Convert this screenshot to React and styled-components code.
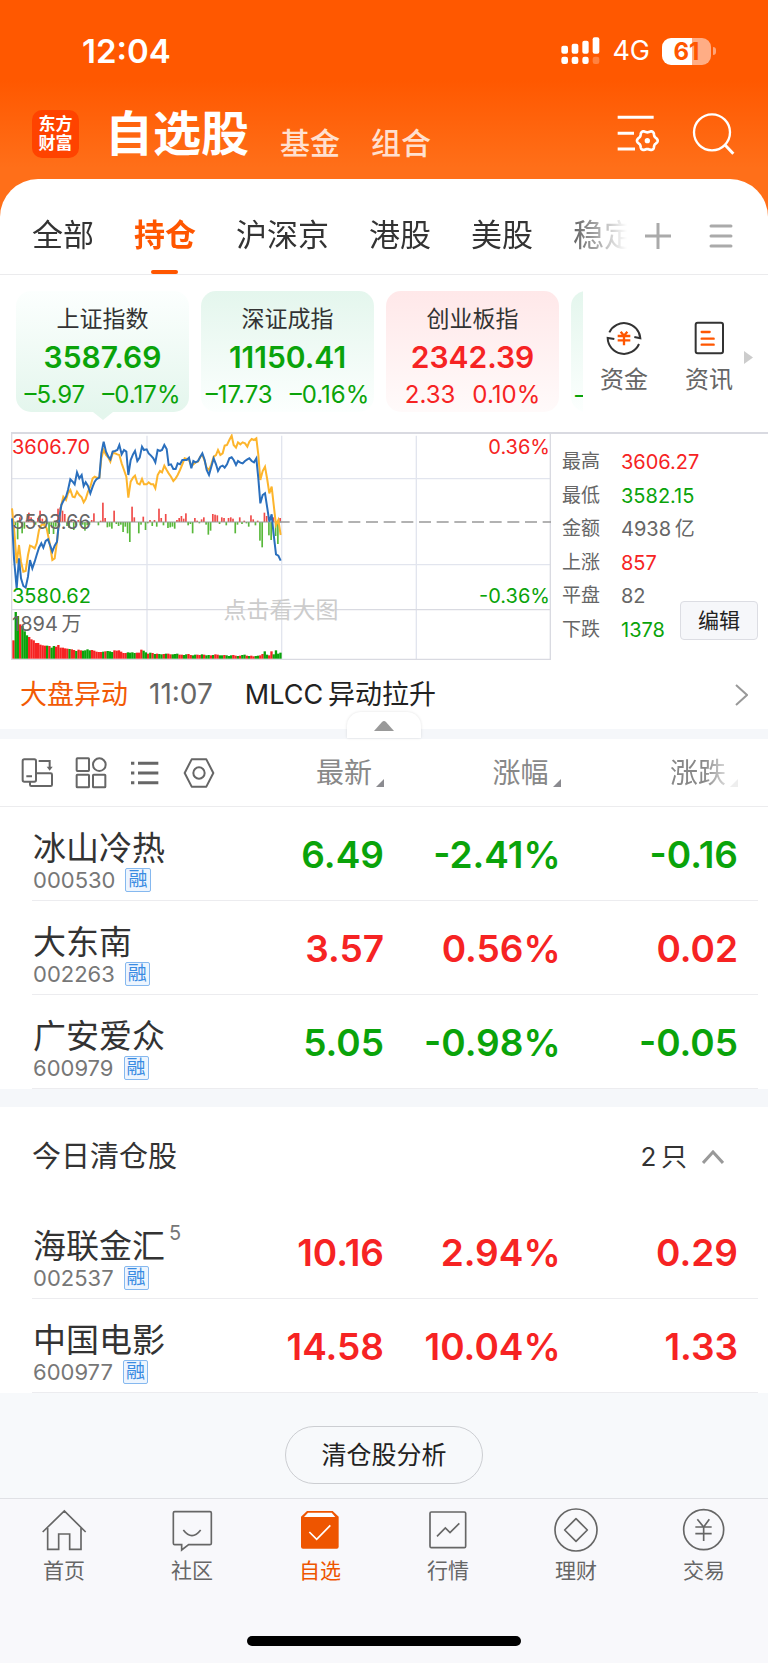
import React from "react";
import styled, { createGlobalStyle } from "styled-components";

const RED = "#f62323";
const GREEN = "#0aa30a";
const ORANGE = "#ff5600";

const GlobalStyle = createGlobalStyle`
  * {
    box-sizing: border-box;
  }
  body {
    margin: 0;
    background: #f8f8fb;
    color: #333;
    font-family: Inter, "Noto Sans CJK SC", sans-serif;
    -webkit-font-smoothing: antialiased;
  }
  button {
    border: 0;
    padding: 0;
    background: none;
    color: inherit;
    font: inherit;
    cursor: pointer;
  }
  a {
    color: inherit;
    text-decoration: none;
  }
  svg {
    display: block;
  }
`;

const toneColor = ({ $tone }) =>
  $tone === "up" ? RED : $tone === "down" ? GREEN : "#666";

/* ---------- header ---------- */

const Header = styled.header`
  padding-bottom: 40px;
  color: #fff;
  background: linear-gradient(#ff5800 80px, #ff6f19 168px);
`;
const StatusBar = styled.div`
  display: flex;
  align-items: center;
  padding: 32px 52px 28px 82px;
  line-height: 38px;
`;
const Clock = styled.time`
  flex: 1;
  font-size: 33px;
  font-weight: 600;
`;
const Network = styled.span`
  margin: 0 12px;
  font-size: 27px;
`;
const Battery = styled.div`
  width: 49px;
  border-radius: 9px;
  background: linear-gradient(90deg, #fff 62%, #ffad85 62%);
  color: ${ORANGE};
  font-size: 24px;
  font-weight: 700;
  line-height: 27px;
  text-align: center;
`;
const BatteryTip = styled.span`
  width: 3px;
  height: 8px;
  margin-left: 2px;
  border-radius: 0 4px 4px 0;
  background: #ffa477;
`;
const TitleBar = styled.div`
  display: flex;
  align-items: center;
  padding: 8px 34px 17px 32px;
`;
const Logo = styled.div`
  width: 47px;
  padding: 5px 0;
  border-radius: 10px;
  background: #ff4300;
  font-size: 17px;
  font-weight: 700;
  line-height: 19px;
  text-align: center;
`;
const Sections = styled.nav`
  flex: 1;
  display: flex;
  align-items: flex-end;
  gap: 31px;
  margin-left: 26px;
`;
const Title = styled.h1`
  margin: 0;
  font-size: 48px;
  font-weight: 700;
  line-height: 56px;
`;
const SectionLink = styled.a`
  color: #ffe0cf;
  font-size: 30px;
  font-weight: 500;
  line-height: 38px;
`;
const HeaderTools = styled.div`
  display: flex;
  gap: 30px;
`;

/* ---------- sheet with tabs ---------- */

const Sheet = styled.main`
  margin-top: -40px;
  border-radius: 38px 38px 0 0;
  background: #fff;
  overflow: hidden;
`;
const TabBar = styled.div`
  display: flex;
  border-bottom: 1px solid #ebebed;
`;
const Tabs = styled.div`
  flex: 1;
  min-width: 0;
  display: flex;
  gap: 40px;
  padding-left: 32px;
  overflow: hidden;
  mask-image: linear-gradient(90deg, #000 calc(100% - 70px), transparent);
`;
const Tab = styled.button`
  position: relative;
  flex: none;
  padding: 36px 0 19px;
  color: ${(p) => (p.$active ? ORANGE : "#333")};
  font-size: 31px;
  font-weight: ${(p) => (p.$active ? 700 : 400)};
  line-height: 40px;
  &::after {
    content: "";
    position: absolute;
    left: 50%;
    bottom: 0;
    width: 27px;
    height: 4px;
    margin-left: -14px;
    border-radius: 2px;
    background: ${(p) => (p.$active ? ORANGE : "transparent")};
  }
`;
const TabTools = styled.div`
  display: flex;
  align-items: center;
  gap: 38px;
  padding: 18px 35px 0 18px;
`;

/* ---------- index cards ---------- */

const IndexStrip = styled.section`
  display: flex;
`;
const Cards = styled.div`
  flex: 1;
  min-width: 0;
  display: flex;
  gap: 12px;
  padding: 16px 0 20px 16px;
  overflow: hidden;
`;
const cardTint = ({ $tone, $active }) => {
  const tint = $tone === "up" ? "#ffe8e9" : "#e4f6ed";
  const light = $tone === "up" ? "#fffafa" : "#fcfffe";
  return $active ? `${light}, ${tint}` : `${tint}, ${light}`;
};
const Card = styled.button`
  position: relative;
  flex: none;
  width: 173px;
  padding: 13px 0 2px;
  border-radius: 15px;
  background: linear-gradient(${cardTint});
  color: ${toneColor};
  &::after {
    content: "";
    display: ${(p) => (p.$active ? "block" : "none")};
    position: absolute;
    top: 100%;
    left: 50%;
    margin-left: -10px;
    border: 10px solid transparent;
    border-top: 8px solid #e4f6ed;
    border-bottom: 0;
  }
`;
const CardName = styled.div`
  color: #333;
  font-size: 23px;
  line-height: 30px;
`;
const CardPrice = styled.div`
  font-size: 30px;
  font-weight: 600;
  line-height: 46px;
`;
const CardChange = styled.div`
  display: flex;
  justify-content: center;
  gap: 17px;
  font-size: 24px;
  line-height: 30px;
`;
const PeekCard = styled(Card)`
  padding: 89px 4px 2px;
  font-size: 24px;
  line-height: 30px;
  text-align: left;
`;
const Shortcuts = styled.div`
  display: flex;
  align-items: center;
  padding: 8px 15px 0 17px;
`;
const Shortcut = styled.a`
  display: flex;
  flex-direction: column;
  align-items: center;
  gap: 8px;
  margin-right: ${(p) => (p.$last ? 11 : 37)}px;
  color: #666;
  font-size: 24px;
  line-height: 32px;
`;

/* ---------- intraday chart ---------- */

const Intraday = styled.section`
  display: flex;
  margin-left: 11px;
  border-top: 2px solid #d9dae1;
`;
const ChartBox = styled.div`
  position: relative;
  flex: 1;
  min-width: 0;
  height: 226px;
`;
const ChartLabel = styled.span`
  position: absolute;
  top: ${(p) => p.$top}px;
  ${(p) => (p.$right ? "right: 1px;" : "left: 1px;")}
  color: ${toneColor};
  font-size: 20px;
  line-height: 24px;
`;
const ChartHint = styled.span`
  position: absolute;
  top: 161px;
  left: 0;
  right: 0;
  color: #ccc;
  font-size: 23px;
  line-height: 30px;
  text-align: center;
`;
const Stats = styled.div`
  position: relative;
  width: 217px;
`;
const StatList = styled.dl`
  display: grid;
  grid-template-columns: 49px 1fr;
  column-gap: 10px;
  align-content: space-between;
  height: 100%;
  margin: 0;
  padding: 18px 0 20px 11px;
  font-size: 19px;
  line-height: 20px;
  color: #666;
`;
const StatValue = styled.dd`
  margin: 0;
  color: ${toneColor};
  font-size: 20px;
`;
const EditButton = styled.button`
  position: absolute;
  right: 10px;
  bottom: 20px;
  padding: 0 17px;
  border: 1px solid #dcdde3;
  border-radius: 4px;
  background: #f6f7fa;
  color: #222;
  font-size: 21px;
  line-height: 37px;
`;

/* ---------- news ticker ---------- */

const News = styled.a`
  display: flex;
  align-items: center;
  padding: 17px 20px;
  font-size: 27px;
  line-height: 35px;
`;
const NewsTag = styled.span`
  margin-right: 21px;
  color: #f25a05;
`;
const NewsTime = styled.time`
  margin-right: 32px;
  color: #666;
  font-size: 28px;
`;
const NewsTitle = styled.span`
  flex: 1;
  color: #222;
`;
const Divider = styled.div`
  position: relative;
  height: ${(p) => p.$size}px;
  background: #f5f7fa;
`;
const Collapse = styled.button`
  position: absolute;
  left: 50%;
  bottom: 1px;
  width: 74px;
  margin-left: -37px;
  padding: 9px 27px 7px;
  border-radius: 14px 14px 0 0;
  background: #fff;
  box-shadow: 0 0 3px rgba(0, 0, 0, 0.12);
`;

/* ---------- stock table ---------- */

const Table = styled.table`
  width: 100%;
  table-layout: fixed;
  border-collapse: collapse;
`;
const HeadRow = styled.tr`
  border-bottom: 1px solid #ececee;
`;
const HeadCell = styled.th`
  width: ${(p) => p.$width};
  padding: 14px ${(p) => (p.$last ? 30 : 0)}px 13px 0;
  color: #888;
  font-size: 28px;
  font-weight: 400;
  line-height: 40px;
  text-align: right;
`;
const SortButton = styled.button`
  display: inline-flex;
  align-items: flex-end;
  gap: 4px;
  ${(p) =>
    p.$faded &&
    "mask-image: linear-gradient(90deg, #000 50%, rgba(0, 0, 0, 0.15) 90%);"}
  &::after {
    content: "";
    margin-bottom: 6px;
    border: 4px solid transparent;
    border-right-color: #8b8b90;
    border-bottom-color: #8b8b90;
  }
`;
const ViewTools = styled.div`
  display: flex;
  gap: 22px;
  padding-left: 21px;
  color: #666;
`;
const Row = styled.tr`
  background: linear-gradient(#ececef, #ececef) no-repeat 32px 100%;
  background-size: calc(100% - 42px) 1px;
`;
const StockCell = styled.th`
  width: 34%;
  padding: 21px 0 9px 33px;
  font-weight: 400;
  text-align: left;
  white-space: nowrap;
`;
const StockName = styled.div`
  font-size: 33px;
  line-height: 40px;
`;
const Days = styled.sup`
  margin-left: 4px;
  color: #777;
  font-size: 20px;
  line-height: 0;
  vertical-align: 18px;
`;
const StockMeta = styled.div`
  display: flex;
  align-items: center;
  gap: 10px;
  color: #777;
  font-size: 22px;
  line-height: 24px;
`;
const Margin = styled.span`
  padding: 0 2px;
  border: 1px solid #85b8ef;
  border-radius: 2px;
  background: #edf5fe;
  color: #3a8be2;
  font-size: 19px;
  line-height: 22px;
`;
const Figure = styled.td`
  width: ${(p) => p.$width};
  padding: 2px ${(p) => (p.$last ? 30 : 0)}px 0 0;
  color: ${toneColor};
  font-size: 37px;
  font-weight: 600;
  line-height: 44px;
  text-align: right;
  white-space: nowrap;
`;
const GroupBar = styled.button`
  display: flex;
  align-items: center;
  width: 100%;
  padding: 30px 44px 28px 32px;
  font-size: 29px;
  line-height: 40px;
  text-align: left;
`;
const GroupCount = styled.span`
  margin: 0 15px 0 auto;
  font-size: 26px;
`;
const Analysis = styled.div`
  display: flex;
  justify-content: center;
  padding: 33px 0 14px;
  background: #f7f9fb;
`;
const AnalysisButton = styled.button`
  padding: 0 35px;
  border: 1px solid #ccced2;
  border-radius: 29px;
  color: #222;
  font-size: 25px;
  line-height: 56px;
`;

/* ---------- bottom navigation ---------- */

const BottomNav = styled.nav`
  display: grid;
  grid-template-columns: repeat(6, 1fr);
  padding-top: 9px;
  border-top: 1px solid #e0e1e5;
`;
const NavItem = styled.a`
  display: flex;
  flex-direction: column;
  align-items: center;
  gap: 5px;
  color: ${(p) => (p.$active ? "#ee5500" : "#666")};
  font-size: 21px;
  line-height: 28px;
`;
const HomeIndicator = styled.div`
  width: 274px;
  height: 10px;
  margin: 51px auto 17px;
  border-radius: 5px;
  background: #000;
`;

/* ---------- icons ---------- */

function Icon({ size, box, width = 5, children }) {
  return (
    <svg
      width={size}
      height={size}
      viewBox={`0 0 ${box} ${box}`}
      fill="none"
      stroke="currentColor"
      strokeWidth={width}
      overflow="visible"
      aria-hidden="true"
    >
      {children}
    </svg>
  );
}

// six-lobed cog around (94, 86)
const cogPoints = Array.from({ length: 72 }, (_, i) => {
  const a = (i / 72) * Math.PI * 2;
  const r = 28 + 3 * Math.cos(a * 6);
  return `${(94 + r * Math.cos(a)).toFixed(1)},${(86 + r * Math.sin(a)).toFixed(1)}`;
}).join(" ");

const SettingsIcon = () => (
  <Icon size={44} box={132} width={9}>
    <path d="M5 16H113M5 64H54M5 111H57" />
    <polygon points={cogPoints} strokeWidth="8" />
    <circle cx="94" cy="86" r="8" fill="currentColor" stroke="none" />
  </Icon>
);

const SearchIcon = () => (
  <Icon size={44} box={132} width={7}>
    <circle cx="66" cy="61" r="54" />
    <path d="M103 97L130 125" strokeWidth="9" />
  </Icon>
);

const Signal = () => (
  <svg width="39" height="28" viewBox="0 0 117 84" fill="#fff" aria-hidden="true">
    <rect x="1" y="26" width="20" height="24" rx="6" />
    <rect x="32" y="20" width="20" height="30" rx="6" />
    <rect x="64" y="11" width="19" height="39" rx="6" />
    <rect x="95" y="1" width="20" height="49" rx="6" />
    <rect x="1" y="59" width="20" height="22" rx="7" />
    <rect x="32" y="59" width="20" height="22" rx="7" />
    <rect x="64" y="59" width="19" height="22" rx="7" />
    <rect x="95" y="59" width="20" height="22" rx="7" opacity="0.25" />
  </svg>
);

const viewIcons = {
  切换: (
    <>
      <rect x="5" y="7" width="40" height="67" rx="5" />
      <path d="M16 58H33M45 49H89Q93 49 93 53V83Q93 87 89 87H31Q27 87 27 83V75M53 12H86V34" />
      <path d="M77 29H95L86 41Z" fill="currentColor" stroke="none" />
    </>
  ),
  宫格: (
    <>
      <rect x="5" y="4" width="37" height="38" rx="2" />
      <circle cx="73" cy="23" r="19" />
      <rect x="5" y="53" width="37" height="38" rx="2" />
      <rect x="54" y="53" width="37" height="38" rx="2" />
    </>
  ),
  列表: (
    <path d="M6 19H16M27 19H88M6 48H16M27 48H88M6 77H16M27 77H88" strokeWidth="9" />
  ),
  设置: (
    <>
      <path d="M5 48L26 7H70L91 48L70 89H26Z" strokeLinejoin="round" />
      <circle cx="48" cy="48" r="17" />
    </>
  ),
};

const navItems = [
  {
    label: "首页",
    icon: <path d="M2 72L67 9L131 72M17 60V124H50V78H83V124H117V60" />,
  },
  {
    label: "社区",
    icon: (
      <>
        <path d="M14 11H120Q124 11 124 15V106Q124 110 120 110H56L35 126V110H14Q10 110 10 106V15Q10 11 14 11Z" />
        <path d="M40 66Q66 100 92 66" />
      </>
    ),
  },
  {
    label: "自选",
    active: true,
    icon: (
      <>
        <path
          d="M9 26L27 9H104L122 26V116Q122 122 116 122H15Q9 122 9 116Z"
          fill="currentColor"
          stroke="none"
        />
        <path d="M18 27L30 14H101L112 27Z" fill="#fff" stroke="none" />
        <path d="M34 72L56 94L97 52" stroke="#fff" />
      </>
    ),
  },
  {
    label: "行情",
    icon: (
      <>
        <rect x="12" y="12" width="107" height="107" rx="4" />
        <path d="M33 85L58 60L72 74L100 46" />
      </>
    ),
  },
  {
    label: "理财",
    icon: (
      <>
        <circle cx="66" cy="66" r="63" />
        <path d="M66 32L100 66L66 100L32 66Z" strokeLinejoin="round" />
      </>
    ),
  },
  {
    label: "交易",
    icon: (
      <>
        <circle cx="65" cy="65" r="60" />
        <path d="M46 34L65 57L82 34M40 57H89M40 77H89M65 57V99" />
      </>
    ),
  },
];

/* ---------- data ---------- */

const tabs = ["全部", "持仓", "沪深京", "港股", "美股", "稳定"];

const indexes = [
  { name: "上证指数", price: "3587.69", diff: "–5.97", pct: "–0.17%", tone: "down" },
  { name: "深证成指", price: "11150.41", diff: "–17.73", pct: "–0.16%", tone: "down" },
  { name: "创业板指", price: "2342.39", diff: "2.33", pct: "0.10%", tone: "up" },
];

const stats = [
  ["最高", "3606.27", "up"],
  ["最低", "3582.15", "down"],
  ["金额", "4938\u2009亿"],
  ["上涨", "857", "up"],
  ["平盘", "82"],
  ["下跌", "1378", "down"],
];

const holdings = [
  { name: "冰山冷热", code: "000530", last: "6.49", pct: "-2.41%", diff: "-0.16", tone: "down" },
  { name: "大东南", code: "002263", last: "3.57", pct: "0.56%", diff: "0.02", tone: "up" },
  { name: "广安爱众", code: "600979", last: "5.05", pct: "-0.98%", diff: "-0.05", tone: "down" },
];

const cleared = [
  { name: "海联金汇", days: 5, code: "002537", last: "10.16", pct: "2.94%", diff: "0.29", tone: "up" },
  { name: "中国电影", code: "600977", last: "14.58", pct: "10.04%", diff: "1.33", tone: "up" },
];

const priceLine =
  "36,280 42,400 50,490 57,400 63,460 70,483 77,488 84,455 90,405 97,430 104,410 110,390 117,368 124,355 130,368 137,348 144,343 150,360 157,380 164,362 171,350 178,280 184,240 190,228 198,215 204,195 211,163 218,170 224,178 231,142 238,160 245,150 251,183 257,172 264,183 271,205 278,185 284,170 290,162 298,158 304,85 311,50 318,80 325,95 331,103 338,80 345,78 352,75 358,60 365,88 372,75 379,80 385,150 392,105 399,88 405,78 412,108 419,98 426,65 432,75 440,73 446,85 453,92 460,100 466,112 473,75 480,78 486,75 493,60 500,72 506,120 513,118 520,132 527,132 533,115 540,118 547,105 554,105 560,105 567,98 574,130 580,108 587,112 594,108 601,95 607,85 614,105 620,135 627,150 634,125 641,100 648,118 654,138 661,125 668,122 674,128 681,118 688,100 695,97 701,105 708,120 714,108 721,113 728,115 735,108 742,103 748,100 755,108 762,112 769,100 775,160 781,235 788,210 795,205 802,250 808,290 815,268 820,320 828,388 835,392 842,407";

const averageLine =
  "36,250 43,320 50,415 57,360 63,410 70,440 77,438 84,390 90,362 97,365 104,370 110,355 117,315 124,300 132,298 140,310 150,360 157,405 164,400 171,350 178,280 184,240 190,215 198,225 204,205 211,195 218,215 224,217 231,200 238,210 245,217 251,232 257,222 264,200 271,185 278,160 284,155 290,158 298,158 304,100 311,75 318,90 325,98 331,110 338,85 345,85 352,88 358,90 365,115 372,135 379,155 385,218 392,170 399,158 405,152 412,175 419,178 426,162 432,178 440,178 446,172 453,178 460,178 466,190 473,150 480,138 486,142 493,122 500,135 506,145 513,155 520,168 527,160 533,150 540,135 547,118 554,100 560,102 567,105 574,122 580,118 587,112 594,110 601,95 607,90 614,108 620,128 627,135 634,118 641,95 648,90 654,75 661,90 668,85 674,62 681,60 688,45 695,32 701,60 708,68 714,52 721,58 728,52 735,55 742,65 748,50 755,42 762,45 769,40 775,90 781,165 788,138 795,125 802,165 808,205 815,185 820,230 828,300 835,285 842,330";

// one entry per minute slot, positive is drawn above the middle line
const momentum = [
  8, -10, -52, 14, -34, -20, 6, 28, 14, 6, -8, 12, 34, 10, -14, -6, -36, -10, -36, -14,
  40, 44, 34, 24, -12, -18, 8, -24, -10, 6, -10, -8, -26, -10, -8, 6, 26, 0, -10, 4,
  58, 12, -16, -14, -20, 34, -6, -12, -8, -30, -14, -34, -60, 46, 14, 0, -34, -8, 16, -24,
  -4, 6, -12, 6, -14, 40, 12, -10, 24, -18, -16, -14, -20, 6, 12, 18, 10, 26, -10, -6,
  -34, 12, 4, -4, 8, 14, -8, -38, -26, 24, 22, 20, -6, 14, 12, -10, 12, 14, 10, -34,
  -8, 14, -6, 4, -4, -14, 20, 8, -10, 4, -56, -76, 28, 18, -40, -54, 14, -42, -66, 12,
];

const volume = [
  55, 140, 128, 103, 98, 82, 70, 65, 58, 55, 47, 47, 42, 40, 39, 39, 38, 33, 38, 36,
  41, 33, 33, 31, 30, 29, 28, 26, 23, 27, 25, 24, 25, 28, 25, 26, 24, 21, 20, 20,
  21, 22, 23, 22, 20, 25, 24, 25, 21, 17, 17, 19, 18, 19, 17, 18, 18, 27, 24, 19,
  15, 18, 17, 14, 15, 14, 13, 14, 15, 15, 13, 13, 14, 15, 12, 12, 11, 13, 14, 11,
  10, 12, 12, 11, 13, 12, 10, 11, 10, 11, 13, 12, 10, 10, 11, 10, 8, 10, 11, 9,
  8, 9, 11, 12, 9, 8, 9, 7, 8, 9, 10, 14, 22, 12, 10, 22, 13, 25, 15, 18,
];
const volumeTone =
  "rggrgggrrrrrrrrgrggrrrrrrgrrgrrggggrrrrrgrgggrrrrrrggggrrrggrgrgrggrgrrgggrrggrrggrrgrggrgrrggrgggrrgrggrgrrggrrggrrgggg";

/* ---------- components ---------- */

function Chart() {
  return (
    <ChartBox>
      <svg
        width="100%"
        height="100%"
        viewBox="33 27 1620 678"
        preserveAspectRatio="none"
        fill="none"
        role="img"
        aria-label="上证指数分时图"
      >
        <g stroke="#e2e5ee" strokeWidth="4">
          <path d="M33 161H1653M33 419H1653M441 32V702M845 32V702M1249 32V702" />
        </g>
        <path d="M35 27V703H1651V27M33 554H1653" stroke="#d9dae1" strokeWidth="4" />
        {momentum.map((value, i) => (
          <rect
            key={i}
            x={37 + i * 6.73}
            y={value > 0 ? 291 - value : 291}
            width="5"
            height={Math.abs(value)}
            fill={value > 0 ? "#f04a48" : "#58b83a"}
          />
        ))}
        <path d="M36 291H845" stroke="#999" strokeWidth="3" />
        <path d="M833 291H1653" stroke="#999" strokeWidth="5" strokeDasharray="36 17" />
        {volume.map((value, i) => (
          <rect
            key={i}
            x={37 + i * 6.73}
            y={701 - value}
            width="7"
            height={value}
            fill={volumeTone[i] === "r" ? RED : GREEN}
          />
        ))}
        <polyline points={averageLine} stroke="#fdb52c" strokeWidth="6" />
        <polyline points={priceLine} stroke="#2a6fbd" strokeWidth="6" />
      </svg>
      <ChartLabel $top={1} $tone="up">3606.70</ChartLabel>
      <ChartLabel $top={76}>3593.66</ChartLabel>
      <ChartLabel $top={150} $tone="down">3580.62</ChartLabel>
      <ChartLabel $top={178}>{"1894\u2009万"}</ChartLabel>
      <ChartLabel $top={1} $right $tone="up">0.36%</ChartLabel>
      <ChartLabel $top={150} $right $tone="down">-0.36%</ChartLabel>
      <ChartHint>点击看大图</ChartHint>
    </ChartBox>
  );
}

function StockRow({ stock }) {
  return (
    <Row>
      <StockCell scope="row">
        <StockName>
          {stock.name}
          {stock.days && <Days>{stock.days}</Days>}
        </StockName>
        <StockMeta>
          {stock.code}
          <Margin>融</Margin>
        </StockMeta>
      </StockCell>
      <Figure $width="16%" $tone={stock.tone}>{stock.last}</Figure>
      <Figure $width="23%" $tone={stock.tone}>{stock.pct}</Figure>
      <Figure $width="27%" $last $tone={stock.tone}>{stock.diff}</Figure>
    </Row>
  );
}

function App() {
  return (
    <>
      <GlobalStyle />
      <Header>
        <StatusBar>
          <Clock>12:04</Clock>
          <Signal />
          <Network>4G</Network>
          <Battery>61</Battery>
          <BatteryTip />
        </StatusBar>
        <TitleBar>
          <Logo>
            东方
            <br />
            财富
          </Logo>
          <Sections>
            <Title>自选股</Title>
            <SectionLink href="#fund">基金</SectionLink>
            <SectionLink href="#portfolio">组合</SectionLink>
          </Sections>
          <HeaderTools>
            <button aria-label="管理">
              <SettingsIcon />
            </button>
            <button aria-label="搜索">
              <SearchIcon />
            </button>
          </HeaderTools>
        </TitleBar>
      </Header>

      <Sheet>
        <TabBar>
          <Tabs>
            {tabs.map((tab) => (
              <Tab key={tab} $active={tab === "持仓"}>
                {tab}
              </Tab>
            ))}
          </Tabs>
          <TabTools>
            <button aria-label="添加分组">
              <svg width="26" height="26" stroke="#aaa" strokeWidth="3">
                <path d="M0 13H26M13 0V26" />
              </svg>
            </button>
            <button aria-label="全部分组">
              <svg width="24" height="26" stroke="#aaa" strokeWidth="3" strokeLinecap="round">
                <path d="M2 3H22M2 13H22M2 23H22" />
              </svg>
            </button>
          </TabTools>
        </TabBar>

        <IndexStrip>
          <Cards>
            {indexes.map((item, i) => (
              <Card key={item.name} $tone={item.tone} $active={i === 0}>
                <CardName>{item.name}</CardName>
                <CardPrice>{item.price}</CardPrice>
                <CardChange>
                  <span>{item.diff}</span>
                  <span>{item.pct}</span>
                </CardChange>
              </Card>
            ))}
            <PeekCard $tone="down">–</PeekCard>
          </Cards>
          <Shortcuts>
            <Shortcut href="#money">
              <Icon size={36} box={108} width={6}>
                <g stroke="#333">
                  <path d="M10 37A49 49 0 0 1 103 55L85 51M25 57L5 54A49 49 0 0 0 99 72" />
                </g>
                <path
                  d="M44 35L54 47L64 35M35 48H73M35 61H73M54 47V76"
                  stroke={ORANGE}
                  strokeWidth="7"
                />
              </Icon>
              资金
            </Shortcut>
            <Shortcut href="#news" $last>
              <Icon size={36} box={108} width={6}>
                <rect x="14" y="8" width="82" height="92" rx="6" stroke="#333" />
                <path
                  d="M32 36H56M32 56H68M32 74H68"
                  stroke={ORANGE}
                  strokeWidth="7"
                  strokeLinecap="round"
                />
              </Icon>
              资讯
            </Shortcut>
            <svg width="9" height="13" fill="#ccc" aria-hidden="true">
              <path d="M0 0L9 6.5L0 13Z" />
            </svg>
          </Shortcuts>
        </IndexStrip>

        <Intraday>
          <Chart />
          <Stats>
            <StatList>
              {stats.map(([label, value, tone]) => (
                <React.Fragment key={label}>
                  <dt>{label}</dt>
                  <StatValue $tone={tone}>{value}</StatValue>
                </React.Fragment>
              ))}
            </StatList>
            <EditButton>编辑</EditButton>
          </Stats>
        </Intraday>

        <News href="#alert">
          <NewsTag>大盘异动</NewsTag>
          <NewsTime>11:07</NewsTime>
          <NewsTitle>{"MLCC\u2009异动拉升"}</NewsTitle>
          <svg width="13" height="22" fill="none" stroke="#999" strokeWidth="2">
            <path d="M1 1L12 11L1 21" />
          </svg>
        </News>
        <Divider $size={10}>
          <Collapse aria-label="收起">
            <svg width="20" height="10" fill="#999">
              <path d="M0 10L8 1Q10 -1 12 1L20 10Z" />
            </svg>
          </Collapse>
        </Divider>

        <Table>
          <thead>
            <HeadRow>
              <HeadCell $width="34%">
                <ViewTools>
                  {Object.entries(viewIcons).map(([label, icon]) => (
                    <button key={label} aria-label={label}>
                      <Icon size={32} box={96} width={6}>
                        {icon}
                      </Icon>
                    </button>
                  ))}
                </ViewTools>
              </HeadCell>
              <HeadCell $width="16%">
                <SortButton>最新</SortButton>
              </HeadCell>
              <HeadCell $width="23%">
                <SortButton>涨幅</SortButton>
              </HeadCell>
              <HeadCell $width="27%" $last>
                <SortButton $faded>涨跌</SortButton>
              </HeadCell>
            </HeadRow>
          </thead>
          <tbody>
            {holdings.map((stock) => (
              <StockRow key={stock.code} stock={stock} />
            ))}
          </tbody>
        </Table>
        <Divider $size={18} />

        <GroupBar aria-expanded="true">
          今日清仓股
          <GroupCount>{"2\u2009只"}</GroupCount>
          <svg width="22" height="14" fill="none" stroke="#999" strokeWidth="3">
            <path d="M1 13L11 2L21 13" />
          </svg>
        </GroupBar>
        <Table>
          <tbody>
            {cleared.map((stock) => (
              <StockRow key={stock.code} stock={stock} />
            ))}
          </tbody>
        </Table>
        <Analysis>
          <AnalysisButton>清仓股分析</AnalysisButton>
        </Analysis>
      </Sheet>

      <BottomNav>
        {navItems.map((item) => (
          <NavItem key={item.label} href="#nav" $active={item.active}>
            <Icon size={44} box={132}>
              {item.icon}
            </Icon>
            {item.label}
          </NavItem>
        ))}
      </BottomNav>
      <HomeIndicator />
    </>
  );
}

export default App;
